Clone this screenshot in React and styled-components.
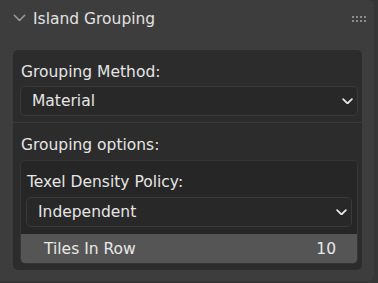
import styled, { createGlobalStyle } from "styled-components";

const GlobalStyle = createGlobalStyle`
  html, body {
    margin: 0;
    padding: 0;
    background: #363636;
  }
  body {
    font-family: "DejaVu Sans", "Liberation Sans", sans-serif;
    color: #e5e5e5;
  }
`;

const Panel = styled.div`
  width: 374px;
  height: 281px;
  box-sizing: border-box;
  background: #3d3d3d;
  border-radius: 0 6px 6px 0;
  padding: 0 12px 0 13px;
`;

const Header = styled.div`
  height: 36px;
  display: flex;
  align-items: center;
  font-size: 15.5px;
  color: #e2e2e2;
`;

const Title = styled.span`
  flex: 1;
  margin-left: 7px;
  padding-top: 1px;
`;

const Grip = styled.div`
  display: grid;
  grid-template-columns: repeat(4, 2px);
  grid-auto-rows: 2px;
  gap: 2px;
  margin-right: -4px;
  margin-top: 1px;
  span {
    background: #8c8c8c;
  }
`;

const Box = styled.div`
  margin-top: 14px;
  background: #2c2c2c;
  border-radius: 5px;
  overflow: hidden;
`;

const Section = styled.div`
  padding: ${({ $pad }) => $pad || "8px 4px 6px 7px"};
`;

const Divider = styled.div`
  height: 1px;
  background: #3a3a3a;
`;

const Label = styled.div`
  height: 28px;
  line-height: 28px;
  font-size: 15.5px;
  padding-left: 1px;
  white-space: nowrap;
`;

const Dropdown = styled.div`
  height: 30px;
  box-sizing: border-box;
  display: flex;
  align-items: center;
  justify-content: space-between;
  background: #282828;
  border: 1px solid #3a3a3a;
  border-radius: 5px;
  padding: 0 4px 0 11px;
  font-size: 15.5px;
  margin-top: ${({ $top }) => $top || "0"};
`;

const SubBox = styled.div`
  margin-top: 1px;
  background: #262626;
  border: 1px solid #363636;
  border-radius: 5px;
  overflow: hidden;
`;

const SubInner = styled.div`
  padding: 7px 5px 7px 5px;
`;

const NumRow = styled.div`
  height: 29px;
  display: flex;
  align-items: center;
  justify-content: space-between;
  background: #555555;
  padding: 0 21px 0 23px;
  font-size: 15.5px;
  color: #e8e8e8;
`;

const Chevron = ({ size = 11, color = "#e6e6e6", width = 1.6 }) => (
  <svg width={size} height={size * 0.6} viewBox="0 0 10 6" style={{ display: "block" }}>
    <polyline
      points="1,1 5,5 9,1"
      fill="none"
      stroke={color}
      strokeWidth={width}
      strokeLinecap="round"
      strokeLinejoin="round"
    />
  </svg>
);

export default function App() {
  return (
    <>
      <GlobalStyle />
      <Panel>
        <Header>
          <Chevron size={13} color="#9a9a9a" width={1.2} />
          <Title>Island Grouping</Title>
          <Grip>
            {Array.from({ length: 8 }).map((_, i) => (
              <span key={i} />
            ))}
          </Grip>
        </Header>
        <Box>
          <Section>
            <Label>Grouping Method:</Label>
            <Dropdown>
              <span>Material</span>
              <Chevron />
            </Dropdown>
          </Section>
          <Divider />
          <Section $pad="8px 4px 6px 7px">
            <Label>Grouping options:</Label>
            <SubBox>
              <SubInner>
                <Label>Texel Density Policy:</Label>
                <Dropdown $top="1px">
                  <span>Independent</span>
                  <Chevron />
                </Dropdown>
              </SubInner>
              <NumRow>
                <span>Tiles In Row</span>
                <span>10</span>
              </NumRow>
            </SubBox>
          </Section>
        </Box>
      </Panel>
    </>
  );
}
